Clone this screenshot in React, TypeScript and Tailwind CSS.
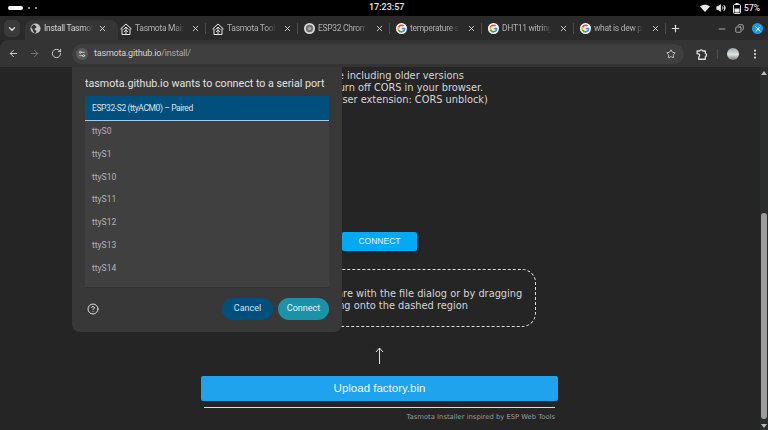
import { ArrowLeft, ArrowRight, ChevronDown, CircleHelp, Copy, EllipsisVertical, Minus, Plus, RotateCw, Settings2, Star, Volume2, X } from 'lucide-react';

const GoogleIcon = () => (
    <svg width="11" height="11" viewBox="0 0 24 24" className="shrink-0">
        <circle cx="12" cy="12" r="12" fill="#fff" />
        <path d="M20.6 12.2c0-.6-.1-1.200-.2-1.800H12v3.400h4.800a4.100 4.100 0 0 1-1.800 2.700v2.200h2.900c1.700-1.600 2.700-3.800 2.700-6.500z" fill="#4285F4" />
        <path d="M12 21c2.400 0 4.400-.8 5.900-2.200L15 16.600c-.8.500-1.800.9-3 .9-2.300 0-4.300-1.600-5-3.700H4v2.300A9 9 0 0 0 12 21z" fill="#34A853" />
        <path d="M7 13.800a5.400 5.400 0 0 1 0-3.500V8H4a9 9 0 0 0 0 8.100l3-2.300z" fill="#FBBC05" />
        <path d="M12 6.600c1.300 0 2.500.5 3.400 1.300L18 5.400A9 9 0 0 0 4 8l3 2.300c.7-2.100 2.700-3.700 5-3.700z" fill="#EA4335" />
    </svg>
);

const TasmotaIcon = () => (
    <svg width="12" height="12" viewBox="0 0 24 24" fill="none" stroke="#e8e8e8" strokeWidth="2" className="shrink-0">
        <path d="M1 12 12 2l11 10M4 23V11M20 23V11M4 23h16" />
        <path d="M12 23V8M7 13l5-5 5 5M8 18l4-4 4 4" strokeWidth="1.800" />
    </svg>
);

const GlobeIcon = () => (
    <svg width="11" height="11" viewBox="0 0 24 24" className="shrink-0">
        <circle cx="12" cy="12" r="11" fill="#c4c7c5" />
        <path d="M8 3c3 2 5 2 6 5s-4 2-4 5 4 2 4 5l-2 4c-4 0-5-4-6-7S2 10 3 8z" fill="#333" />
    </svg>
);

const EspIcon = () => (
    <svg width="11" height="11" viewBox="0 0 24 24" className="shrink-0">
        <circle cx="12" cy="12" r="12" fill="#d8d8d8" />
        <circle cx="12" cy="12" r="8" fill="#6f6f6f" />
        <circle cx="12" cy="12" r="4" fill="#a8a8a8" />
    </svg>
);

const ExtensionIcon = () => (
    <svg width="12" height="12" viewBox="0 0 16 16" fill="none" stroke="#e0e0e0" strokeWidth="1.700" strokeLinejoin="round" className="ml-[12px] shrink-0">
        <path d="M1.500 4h3.300a2.200 2.200 0 0 1 4.200 0h3.500v3.300a2.200 2.200 0 0 1 0 4.200V15H3.500l.5-3.500a2.200 2.200 0 0 0 0-3.500L1.500 7.500z" />
    </svg>
);

const tabs = [
    { title: 'Tasmota Main Page', icon: <TasmotaIcon /> },
    { title: 'Tasmota Tools Page', icon: <TasmotaIcon /> },
    { title: 'ESP32 Chrome Install', icon: <EspIcon /> },
    { title: 'temperature sensor', icon: <GoogleIcon /> },
    { title: 'DHT11 witring diagram', icon: <GoogleIcon /> },
    { title: 'what is dew point', icon: <GoogleIcon /> },
];

const ports = ['ttyS0', 'ttyS1', 'ttyS10', 'ttyS11', 'ttyS12', 'ttyS13', 'ttyS14'];

const StatusBar = () => (
    <div className="h-[16px] bg-black flex items-center justify-between pl-[8px] pr-[8px] shrink-0 relative">
        <div className="flex items-center gap-[5px]">
            <div className="w-[15px] h-[4px] rounded-full bg-white"></div>
            <div className="w-[2px] h-[2px] rounded-full bg-[#bbb]"></div>
            <div className="w-[2px] h-[2px] rounded-full bg-[#bbb]"></div>
        </div>
        <span className="absolute left-[369px] top-[1px] text-[9px] leading-[12px] font-medium text-[#e8e8e8] font-['Roboto',sans-serif]">17:23:57</span>
        <div className="flex items-center gap-[5px] text-[#e8e8e8]">
            <svg width="10" height="8" viewBox="0 0 20 16" fill="#e8e8e8"><path d="M10 16 0 5c5.500-5 14.500-5 20 0z" /></svg>
            <Volume2 size={10} fill="#e8e8e8" strokeWidth={2} className="ml-[1px]" />
            <svg width="8" height="11" viewBox="0 0 8 11" fill="none" className="ml-[2px]"><rect x=".5" y="1.500" width="7" height="9" rx="1" stroke="#e8e8e8" /><rect x="2.500" y="0" width="3" height="1.500" fill="#e8e8e8" /><rect x="1.500" y="5.500" width="5" height="4" fill="#e8e8e8" /></svg>
            <span className="text-[8.500px] leading-[12px] font-medium font-['Roboto',sans-serif] -ml-[2px]">57%</span>
        </div>
    </div>
);

const TabStrip = () => (
    <div className="h-[24px] bg-[#2a2a2a] flex items-end pl-[4px] shrink-0">
        <div className="w-[16px] h-[17px] mb-[3px] rounded-[5px] bg-[#3a3a3a] flex items-center justify-center text-[#e3e3e3] shrink-0">
            <ChevronDown size={10} strokeWidth={3} />
        </div>
        <div className="w-[93px] h-[20px] ml-[5px] rounded-t-[8px] bg-[#353535] flex items-center pl-[5px] pr-[11px] pb-[3px] shrink-0 relative z-10">
            <GlobeIcon />
            <span className="ml-[3px] w-[49px] whitespace-nowrap overflow-hidden text-[8.500px] tracking-[-0.3px] text-[#d4d4d4] font-['Roboto',sans-serif] [mask-image:linear-gradient(90deg,#000_80%,transparent)]">Install Tasmota</span>
            <X size={9} strokeWidth={2.500} className="ml-auto text-[#dcdcdc]" />
        </div>
        <div className="flex -ml-[5px]">
            {tabs.map((tab, i) => (
                <div key={i} className="w-[92px] h-[20px] flex items-center pb-[3px] shrink-0">
                    <div className="w-[1px] h-[11px] bg-[#4a4a4a] shrink-0 mr-[6px]"></div>
                    <div className="flex items-center w-[80px]">
                        {tab.icon}
                        <span className="ml-[3px] w-[49px] whitespace-nowrap overflow-hidden text-[8.500px] tracking-[-0.3px] text-[#b0b0b0] font-['Roboto',sans-serif] [mask-image:linear-gradient(90deg,#000_80%,transparent)]">{tab.title}</span>
                        <X size={9} strokeWidth={2.500} className="ml-auto text-[#d0d0d0]" />
                    </div>
                </div>
            ))}
        </div>
        <div className="w-[1px] h-[11px] bg-[#4a4a4a] shrink-0 mb-[6px]"></div>
        <Plus size={11} strokeWidth={2.500} className="text-[#e3e3e3] ml-[4px] mb-[6px] shrink-0" />
        <div className="ml-auto flex items-center gap-[8px] pr-[5px] mb-[6px] text-[#c8c8c8]">
            <Minus size={10} />
            <Copy size={9} className="-scale-x-100" />
            <div className="w-[11px] h-[11px] rounded-full bg-[#1a9be8] flex items-center justify-center text-white">
                <X size={8} strokeWidth={3} />
            </div>
        </div>
    </div>
);

const Toolbar = () => (
    <div className="h-[27px] bg-[#343434] rounded-tl-[8px] flex items-center pl-[8px] shrink-0 text-[#d8d8d8]">
        <ArrowLeft size={11} strokeWidth={2} />
        <ArrowRight size={11} strokeWidth={2} className="ml-[10px] text-[#7b7b7b]" />
        <RotateCw size={11} strokeWidth={2} className="ml-[11px]" />
        <div className="ml-[10px] w-[612px] h-[20px] mt-[1px] rounded-full bg-[#3f3f3f] flex items-center pl-[4px] pr-[8px] shrink-0">
            <div className="w-[12px] h-[12px] rounded-full bg-[#5a5a5a] flex items-center justify-center">
                <Settings2 size={8} strokeWidth={2.500} />
            </div>
            <span className="ml-[6px] text-[9px] tracking-[-0.2px] text-[#d4d4d4] font-['Roboto',sans-serif]">tasmota.github.io<span className="text-[#a8a8a8]">/install/</span></span>
            <Star size={10} strokeWidth={2} className="ml-auto" />
        </div>
        <ExtensionIcon />
        <div className="ml-[9px] w-[1px] h-[10px] bg-[#4c4c4c] shrink-0"></div>
        <div className="ml-[9px] w-[12px] h-[12px] rounded-full bg-[linear-gradient(180deg,#9fa9b1,#e2e2e2_55%,#767676)] shrink-0"></div>
        <EllipsisVertical size={12} strokeWidth={2.500} className="ml-[10px] shrink-0" />
    </div>
);

const Dialog = () => (
    <div className="absolute left-[72px] top-0 w-[270px] h-[265px] bg-[#383838] rounded-b-[8px] px-[13px] font-['Roboto',sans-serif]">
        <h2 className="pt-[9px] text-[10.700px] leading-[16px] text-[#e2e2e2] whitespace-nowrap">tasmota.github.io wants to connect to a serial port</h2>
        <div className="mt-[4px] h-[192px] bg-[#404040] border-b border-[#333]">
            <div className="h-[25px] bg-[#004f7c] border-b-[1px] border-[#a9c7e8] flex items-center pl-[7px] pt-[1px] text-[8.500px] tracking-[-0.4px] text-[#d6e4f0]">ESP32-S2 (ttyACM0) – Paired</div>
            {ports.map(port => (
                <div key={port} className="h-[22.800px] flex items-center pl-[7px] pb-[2px] text-[8.500px] text-[#b4b4b4]">{port}</div>
            ))}
        </div>
        <div className="mt-[10px] flex items-center">
            <CircleHelp size={12} strokeWidth={2} className="text-[#e0e0e0] ml-[2px]" />
            <div className="ml-auto flex gap-[5px]">
                <button className="w-[51px] h-[22px] rounded-full bg-[#00507d] text-[9px] text-[#cfe3f0]">Cancel</button>
                <button className="w-[51px] h-[22px] rounded-full bg-[#1a93a8] text-[9px] text-[#e2f4f6]">Connect</button>
            </div>
        </div>
    </div>
);

const Page = () => (
    <div className="flex-1 min-w-0 flex flex-col items-center pr-[1px] bg-[#252525] font-['DejaVu_Sans',sans-serif] text-[#d6d6d6]">
        <div className="w-[313px] pt-[3px] text-[9.800px] leading-[12px] whitespace-nowrap">
            <p>Install firmware via a file including older versions</p>
            <p className="ml-[24px]">If it fails you may turn off CORS in your browser.</p>
            <p className="ml-[18px]">(Recommend a browser extension: CORS unblock)</p>
        </div>
        <button className="mt-[126px] w-[75px] h-[19px] rounded-[2px] bg-[#03a9f4] text-[8.500px] font-medium text-[#e6f6fe] font-['Liberation_Sans',sans-serif] shadow-md">CONNECT</button>
        <div className="mt-[18px] w-[313px] h-[58px] rounded-[14px] border border-dashed border-[#dcdcdc] pt-[3px] flex flex-col justify-center text-[9.800px] leading-[12px] whitespace-nowrap">
            <p className="ml-[27px]">Select your firmware with the file dialog or by dragging</p>
            <p className="ml-[36px]">and then dropping onto the dashed region</p>
        </div>
        <svg width="9" height="17" viewBox="0 0 9 17" fill="none" stroke="#e0e0e0" className="mt-[20px]">
            <path d="M4.500 17V1M1 5l3.500-4L8 5" />
        </svg>
        <button className="mt-[12px] w-[357px] h-[25px] rounded-[2px] bg-[#1fa3ec] text-[11.500px] text-[#f0f8fe] font-['Liberation_Sans',sans-serif]">Upload factory.bin</button>
        <div className="mt-[6px] w-[351px] h-[1px] bg-[#dcdcdc]"></div>
        <p className="mt-[3px] w-[351px] text-right text-[6.800px] leading-[12px] text-[#9a9a9a]">Tasmota Installer inspired by ESP Web Tools</p>
    </div>
);

const Scrollbar = () => (
    <div className="w-[8px] bg-[#2b2d2c] flex flex-col items-center shrink-0 pt-[4px]">
        <div className="w-0 h-0 border-x-[3px] border-x-transparent border-b-[4px] border-b-[#bbb]"></div>
        <div className="mt-[138px] w-[6px] h-[206px] rounded-full bg-[#9c9c9c]"></div>
        <div className="mt-[5px] w-0 h-0 border-x-[3px] border-x-transparent border-t-[4px] border-t-[#bbb]"></div>
    </div>
);

const App = () => {
    return (
        <div className="w-[768px] h-[430px] overflow-hidden flex flex-col bg-[#252525]">
            <StatusBar />
            <TabStrip />
            <Toolbar />
            <div className="flex-1 min-h-0 flex relative overflow-hidden">
                <Page />
                <Scrollbar />
                <Dialog />
            </div>
        </div>
    );
};

export default App;
